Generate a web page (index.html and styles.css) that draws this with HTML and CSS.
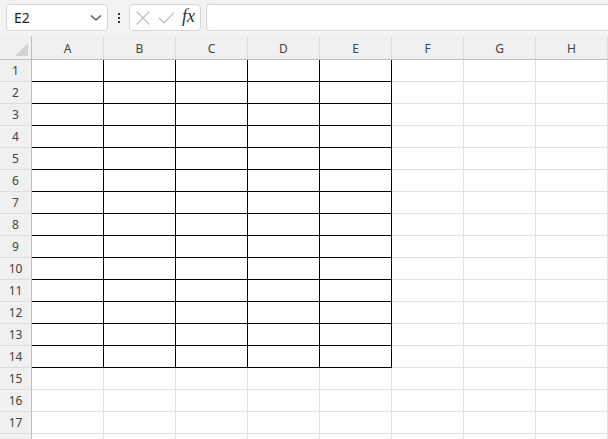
FILE: index.html
```html
<!DOCTYPE html>
<html lang="en">

<head>
    <meta charset="UTF-8">
    <title>Sheet</title>
    <link rel="stylesheet" href="styles.css">
</head>

<body>
    <div class="topBar">
        <div class="nameBox">
            <span>E2</span>
            <svg width="12" height="8" viewBox="0 0 12 8"><path d="M1 1.5 L6 6 L11 1.5" fill="none" stroke="#444" stroke-width="1.2"/></svg>
        </div>
        <div class="dots"><span></span><span></span><span></span></div>
        <div class="formulaBtns">
            <svg width="16" height="16" viewBox="0 0 16 16"><path d="M1.5 1.5 L14.5 14.5 M14.5 1.5 L1.5 14.5" stroke="#bdbdbd" stroke-width="1.2"/></svg>
            <svg width="17" height="14" viewBox="0 0 17 14"><path d="M1 7 L6 12 L16 1.5" fill="none" stroke="#bdbdbd" stroke-width="1.2"/></svg>
            <span class="fx">fx</span>
        </div>
        <div class="formulaInput"></div>
    </div>

    <div class="sheet">
        <div class="corner"><span class="tri"></span></div>
        <div class="colHead">A</div><div class="colHead">B</div><div class="colHead">C</div><div class="colHead">D</div>
        <div class="colHead">E</div><div class="colHead">F</div><div class="colHead">G</div><div class="colHead">H</div>

        <div class="rowHead">1</div><div class="cell b"></div><div class="cell b"></div><div class="cell b"></div><div class="cell b"></div><div class="cell b"></div><div class="cell"></div><div class="cell"></div><div class="cell"></div>
        <div class="rowHead">2</div><div class="cell b"></div><div class="cell b"></div><div class="cell b"></div><div class="cell b"></div><div class="cell b"></div><div class="cell"></div><div class="cell"></div><div class="cell"></div>
        <div class="rowHead">3</div><div class="cell b"></div><div class="cell b"></div><div class="cell b"></div><div class="cell b"></div><div class="cell b"></div><div class="cell"></div><div class="cell"></div><div class="cell"></div>
        <div class="rowHead">4</div><div class="cell b"></div><div class="cell b"></div><div class="cell b"></div><div class="cell b"></div><div class="cell b"></div><div class="cell"></div><div class="cell"></div><div class="cell"></div>
        <div class="rowHead">5</div><div class="cell b"></div><div class="cell b"></div><div class="cell b"></div><div class="cell b"></div><div class="cell b"></div><div class="cell"></div><div class="cell"></div><div class="cell"></div>
        <div class="rowHead">6</div><div class="cell b"></div><div class="cell b"></div><div class="cell b"></div><div class="cell b"></div><div class="cell b"></div><div class="cell"></div><div class="cell"></div><div class="cell"></div>
        <div class="rowHead">7</div><div class="cell b"></div><div class="cell b"></div><div class="cell b"></div><div class="cell b"></div><div class="cell b"></div><div class="cell"></div><div class="cell"></div><div class="cell"></div>
        <div class="rowHead">8</div><div class="cell b"></div><div class="cell b"></div><div class="cell b"></div><div class="cell b"></div><div class="cell b"></div><div class="cell"></div><div class="cell"></div><div class="cell"></div>
        <div class="rowHead">9</div><div class="cell b"></div><div class="cell b"></div><div class="cell b"></div><div class="cell b"></div><div class="cell b"></div><div class="cell"></div><div class="cell"></div><div class="cell"></div>
        <div class="rowHead">10</div><div class="cell b"></div><div class="cell b"></div><div class="cell b"></div><div class="cell b"></div><div class="cell b"></div><div class="cell"></div><div class="cell"></div><div class="cell"></div>
        <div class="rowHead">11</div><div class="cell b"></div><div class="cell b"></div><div class="cell b"></div><div class="cell b"></div><div class="cell b"></div><div class="cell"></div><div class="cell"></div><div class="cell"></div>
        <div class="rowHead">12</div><div class="cell b"></div><div class="cell b"></div><div class="cell b"></div><div class="cell b"></div><div class="cell b"></div><div class="cell"></div><div class="cell"></div><div class="cell"></div>
        <div class="rowHead">13</div><div class="cell b"></div><div class="cell b"></div><div class="cell b"></div><div class="cell b"></div><div class="cell b"></div><div class="cell"></div><div class="cell"></div><div class="cell"></div>
        <div class="rowHead">14</div><div class="cell b"></div><div class="cell b"></div><div class="cell b"></div><div class="cell b"></div><div class="cell b"></div><div class="cell"></div><div class="cell"></div><div class="cell"></div>
        <div class="rowHead">15</div><div class="cell"></div><div class="cell"></div><div class="cell"></div><div class="cell"></div><div class="cell"></div><div class="cell"></div><div class="cell"></div><div class="cell"></div>
        <div class="rowHead">16</div><div class="cell"></div><div class="cell"></div><div class="cell"></div><div class="cell"></div><div class="cell"></div><div class="cell"></div><div class="cell"></div><div class="cell"></div>
        <div class="rowHead">17</div><div class="cell"></div><div class="cell"></div><div class="cell"></div><div class="cell"></div><div class="cell"></div><div class="cell"></div><div class="cell"></div><div class="cell"></div>
        <div class="rowHead"></div><div class="cell"></div><div class="cell"></div><div class="cell"></div><div class="cell"></div><div class="cell"></div><div class="cell"></div><div class="cell"></div><div class="cell"></div>
    </div>
</body>

</html>
```

FILE: styles.css
```css
* {
    margin: 0;
    padding: 0;
    box-sizing: border-box;
}

body {
    width: 608px;
    height: 439px;
    overflow: hidden;
    background-color: white;
    font-family: "Noto Sans", "Open Sans", sans-serif;
}

.topBar {
    display: flex;
    align-items: flex-start;
    height: 36px;
    padding: 4px 0 0 6px;
    background-color: #f3f3f3;
}

.nameBox {
    display: flex;
    align-items: center;
    justify-content: space-between;
    width: 102px;
    height: 27px;
    padding: 0 5px 0 7px;
    border: 1px solid #d6d6d6;
    border-radius: 4px;
    background-color: white;
    font-size: 14px;
    color: #222;
}

.nameBox svg {
    margin-top: 1px;
}

.dots {
    display: flex;
    flex-direction: column;
    align-items: center;
    justify-content: center;
    gap: 2px;
    width: 21px;
    height: 27px;
}

.dots span {
    width: 2px;
    height: 2px;
    background-color: #333;
}

.formulaBtns {
    display: flex;
    align-items: center;
    gap: 7px;
    width: 72px;
    height: 27px;
    padding-left: 5px;
    border: 1px solid #d6d6d6;
    border-radius: 4px;
    background-color: white;
}

.fx {
    font-family: "Liberation Serif", serif;
    font-style: italic;
    font-size: 18px;
    color: #333;
    margin-top: -3px;
}

.formulaInput {
    flex: 1;
    height: 27px;
    margin-left: 5px;
    border: 1px solid #d6d6d6;
    border-right: none;
    border-radius: 4px 0 0 4px;
    background-color: white;
}

.sheet {
    display: grid;
    grid-template-columns: 32px repeat(8, 72px);
    grid-template-rows: 24px;
    grid-auto-rows: 22px;
}

.corner {
    position: relative;
    background-color: #f0f0f0;
    border-right: 1px solid #bdbdbd;
    border-bottom: 1px solid #bdbdbd;
}

.tri {
    position: absolute;
    right: 3px;
    bottom: 3px;
    width: 0;
    height: 0;
    border-left: 13px solid transparent;
    border-bottom: 13px solid #d3d3d3;
}

.colHead {
    display: flex;
    align-items: center;
    justify-content: center;
    background-color: #f0f0f0;
    border-right: 1px solid #dcdcdc;
    border-bottom: 1px solid #bdbdbd;
    font-size: 12px;
    color: #444;
    padding-top: 1px;
}

.rowHead {
    display: flex;
    align-items: center;
    justify-content: center;
    background-color: #f0f0f0;
    border-right: 1px solid #bdbdbd;
    border-bottom: 1px solid #dcdcdc;
    font-size: 12px;
    color: #444;
}

.cell {
    border-right: 1px solid #e1e1e1;
    border-bottom: 1px solid #e1e1e1;
}

.b {
    border-right-color: black;
    border-bottom-color: black;
}
```
